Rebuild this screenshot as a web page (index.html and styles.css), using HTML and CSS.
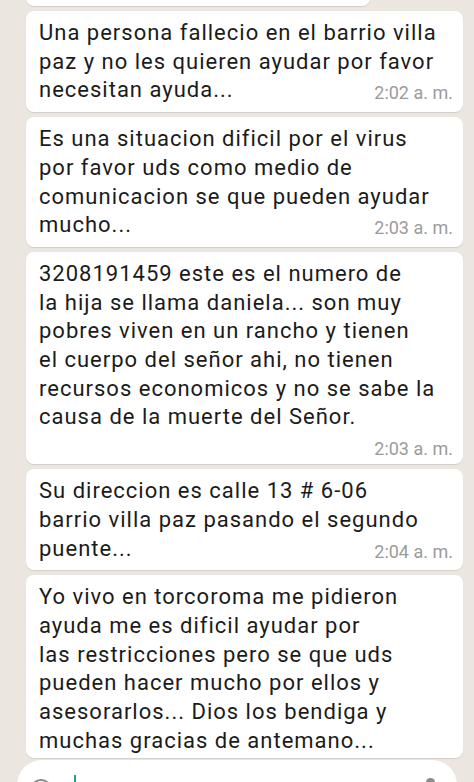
FILE: index.html
```html
<!DOCTYPE html>
<html lang="es">
<head>
    <meta charset="UTF-8">
    <meta name="viewport" content="width=device-width, initial-scale=1.0">
    <title>Chat</title>
    <link rel="stylesheet" href="styles.css">
</head>
<body>
    <div class="chat">
        <div class="bubble bubble-prev"></div>

        <div class="bubble">
            Una persona fallecio en el barrio villa<br>
            paz y no les quieren ayudar por favor<br>
            necesitan ayuda...
            <span class="time">2:02 a. m.</span>
        </div>

        <div class="bubble">
            Es una situacion dificil por el virus<br>
            por favor uds como medio de<br>
            comunicacion se que pueden ayudar<br>
            mucho...
            <span class="time">2:03 a. m.</span>
        </div>

        <div class="bubble">
            3208191459 este es el numero de<br>
            la hija se llama daniela... son muy<br>
            pobres viven en un rancho y tienen<br>
            el cuerpo del señor ahi, no tienen<br>
            recursos economicos y no se sabe la<br>
            causa de la muerte del Señor.
            <span class="time">2:03 a. m.</span>
        </div>

        <div class="bubble">
            Su direccion es calle 13 # 6-06<br>
            barrio villa paz pasando el segundo<br>
            puente...
            <span class="time">2:04 a. m.</span>
        </div>

        <div class="bubble bubble-last">
            Yo vivo en torcoroma me pidieron<br>
            ayuda me es dificil ayudar por<br>
            las restricciones pero se que uds<br>
            pueden hacer mucho por ellos y<br>
            asesorarlos... Dios los bendiga y<br>
            muchas gracias de antemano...
        </div>
    </div>

    <!-- message input, only its top edge is on screen -->
    <div class="composer">
        <span class="emoji"></span>
        <span class="cursor"></span>
        <span class="clip"></span>
    </div>
</body>
</html>
```

FILE: styles.css
```css
html, body {
    height: 100%;
}

body {
    margin: 0;
    background-color: #ebe6df;
    font-family: Roboto, "Noto Sans", Arial, sans-serif;
    color: #1b1b1b;
    overflow: hidden;
    position: relative;
}

.chat {
    display: flex;
    flex-direction: column;
    align-items: flex-start;
    gap: 5px;
    padding: 0 11px 0 26px;
}

.bubble {
    display: flow-root;
    box-sizing: border-box;
    width: 100%;
    background-color: #fff;
    border-radius: 8px;
    padding: 8px 10px 7px 13px;
    font-size: 22px;
    line-height: 28.7px;
    letter-spacing: 1px;
    white-space: nowrap;
    box-shadow: 0 1px 1px rgba(0, 0, 0, 0.1);
}

.bubble-prev {
    width: 344px;
    height: 20px;
    margin-top: -14px;
    padding: 0;
}

.bubble-last {
    padding-bottom: 3px;
}

.time {
    float: right;
    margin: 7px 0 -2px 28px;
    font-size: 18px;
    line-height: 20px;
    letter-spacing: 0;
    color: #9b9b9b;
}

/* Composer */
.composer {
    position: absolute;
    left: 17px;
    right: 17px;
    top: 760px;
    height: 50px;
    background-color: #fff;
    border-radius: 25px;
}

.emoji {
    position: absolute;
    left: 13px;
    top: 19px;
    width: 18px;
    height: 18px;
    border: 2px solid #8a8a8a;
    border-radius: 50%;
}

.cursor {
    position: absolute;
    left: 57px;
    top: 15px;
    width: 2px;
    height: 22px;
    background-color: #1aa38b;
}

.clip {
    position: absolute;
    right: 22px;
    top: 18px;
    width: 9px;
    height: 16px;
    border-radius: 5px;
    background-color: #8a8a8a;
}
```
